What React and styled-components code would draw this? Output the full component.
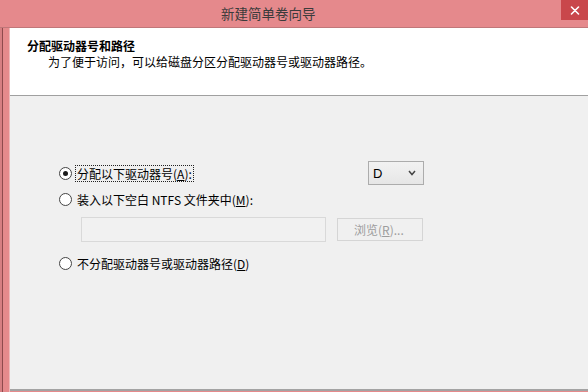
import React, { useState } from "react";
import styled, { createGlobalStyle } from "styled-components";

const GlobalStyle = createGlobalStyle`
  html, body {
    margin: 0;
    padding: 0;
    width: 588px;
    height: 392px;
    overflow: hidden;
    background: #e58a8c;
  }
  * {
    box-sizing: border-box;
  }
`;

const font = `"Noto Sans CJK SC", "Noto Sans", sans-serif`;

const Window = styled.div`
  display: flex;
  flex-direction: column;
  width: 588px;
  height: 392px;
  font-family: ${font};
  font-size: 12px;
  color: #000;
`;

const TitleBar = styled.div`
  display: flex;
  align-items: flex-start;
  height: 28px;
  background: #e5898c;
  border-bottom: 1px solid #c07779;
  position: relative;
`;

const Title = styled.div`
  margin-left: 221px;
  margin-top: 4px;
  font-size: 13.5px;
  line-height: 18px;
  color: #3b3b3b;
`;

const CloseButton = styled.div`
  position: absolute;
  top: 0;
  right: 0;
  width: 27px;
  height: 20px;
  background: #c9474b;
  display: flex;
  align-items: center;
  justify-content: center;
`;

const Body = styled.div`
  display: flex;
  flex: 1;
  min-height: 0;
`;

const LeftFrame = styled.div`
  width: 10px;
  background: linear-gradient(
    to right,
    #d67f82 0,
    #d67f82 2px,
    #8e4a4d 2px,
    #8e4a4d 3px,
    #e58a8c 3px,
    #e58a8c 9px,
    #eeb8b9 9px
  );
`;

const Content = styled.div`
  flex: 1;
  display: flex;
  flex-direction: column;
  background: #f0f0f0;
  border-bottom: 2px solid #a3a3a3;
  margin-bottom: 1px;
`;

const Header = styled.div`
  height: 68px;
  background: #ffffff;
  border-bottom: 1px solid #a0a0a0;
  padding: 10px 0 0 17px;
`;

const HeaderTitle = styled.div`
  font-weight: bold;
  line-height: 16px;
`;

const HeaderText = styled.div`
  margin-left: 21px;
  line-height: 16px;
`;

const Main = styled.div`
  flex: 1;
  padding: 65px 0 0 49px;
`;

const Options = styled.div`
  display: flex;
  flex-direction: column;
  width: 365px;
`;

const Row = styled.div`
  display: flex;
  align-items: center;
  justify-content: space-between;
  height: ${(p) => p.h}px;
  margin-top: ${(p) => p.mt || 0}px;
`;

const Choice = styled.label`
  display: flex;
  align-items: center;
  gap: 4px;
  cursor: default;
`;

const RadioCircle = styled.span`
  width: 13px;
  height: 13px;
  border-radius: 50%;
  border: 1px solid #444;
  background: #fff;
  display: flex;
  align-items: center;
  justify-content: center;
  &::after {
    content: "";
    width: 5px;
    height: 5px;
    border-radius: 50%;
    background: #1a1a1a;
    display: ${(p) => (p.checked ? "block" : "none")};
  }
`;

const ChoiceText = styled.span`
  line-height: 15px;
  padding: 0 1px;
  outline: ${(p) => (p.focused ? "1px dotted #222" : "none")};
`;

const Key = styled.span`
  text-decoration: underline;
`;

const Select = styled.div`
  width: 56px;
  height: 24px;
  border: 1px solid #acacac;
  background: linear-gradient(#f2f2f2, #e6e6e6);
  display: flex;
  align-items: center;
  justify-content: space-between;
  padding: 0 7px 0 4px;
  font-size: 13px;
  font-family: "Liberation Sans", Arial, sans-serif;
`;

const PathRow = styled.div`
  display: flex;
  align-items: center;
  gap: 11px;
  margin: 9px 0 0 22px;
`;

const PathInput = styled.div`
  width: 245px;
  height: 25px;
  border: 1px solid #d9d9d9;
  background: #f1f1f1;
`;

const BrowseButton = styled.div`
  width: 86px;
  height: 23px;
  border: 1px solid #d5d5d5;
  background: #f0f0f0;
  color: #9d9d9d;
  display: flex;
  align-items: center;
  padding-left: 16px;
  line-height: 14px;
`;

const options = [
  { id: "letter", text: "分配以下驱动器号", key: "A", tail: "):" },
  { id: "folder", text: "装入以下空白 NTFS 文件夹中", key: "M", tail: "):" },
  { id: "none", text: "不分配驱动器号或驱动器路径", key: "D", tail: ")" },
];

const Radio = ({ option, selected, onSelect }) => (
  <Choice onClick={() => onSelect(option.id)}>
    <RadioCircle checked={selected === option.id} />
    <ChoiceText focused={selected === option.id}>
      {option.text}(<Key>{option.key}</Key>
      {option.tail}
    </ChoiceText>
  </Choice>
);

const App = () => {
  const [selected, setSelected] = useState("letter");

  return (
    <>
      <GlobalStyle />
      <Window>
        <TitleBar>
          <Title>新建简单卷向导</Title>
          <CloseButton>
            <svg width="10" height="9" viewBox="0 0 10 9">
              <path
                d="M1.5 1 L8.5 8 M8.5 1 L1.5 8"
                stroke="#fff"
                strokeWidth="1.6"
                strokeLinecap="round"
              />
            </svg>
          </CloseButton>
        </TitleBar>
        <Body>
          <LeftFrame />
          <Content>
            <Header>
              <HeaderTitle>分配驱动器号和路径</HeaderTitle>
              <HeaderText>为了便于访问，可以给磁盘分区分配驱动器号或驱动器路径。</HeaderText>
            </Header>
            <Main>
              <Options>
                <Row h={24}>
                  <Radio option={options[0]} selected={selected} onSelect={setSelected} />
                  <Select>
                    <span>D</span>
                    <svg width="8" height="6" viewBox="0 0 8 6">
                      <path d="M1 1 L4 4.5 L7 1" fill="none" stroke="#444" strokeWidth="1.5" />
                    </svg>
                  </Select>
                </Row>
                <Row h={18} mt={5}>
                  <Radio option={options[1]} selected={selected} onSelect={setSelected} />
                </Row>
                <PathRow>
                  <PathInput />
                  <BrowseButton>
                    浏览(<Key>R</Key>)...
                  </BrowseButton>
                </PathRow>
                <Row h={18} mt={12}>
                  <Radio option={options[2]} selected={selected} onSelect={setSelected} />
                </Row>
              </Options>
            </Main>
          </Content>
        </Body>
      </Window>
    </>
  );
};

export default App;
